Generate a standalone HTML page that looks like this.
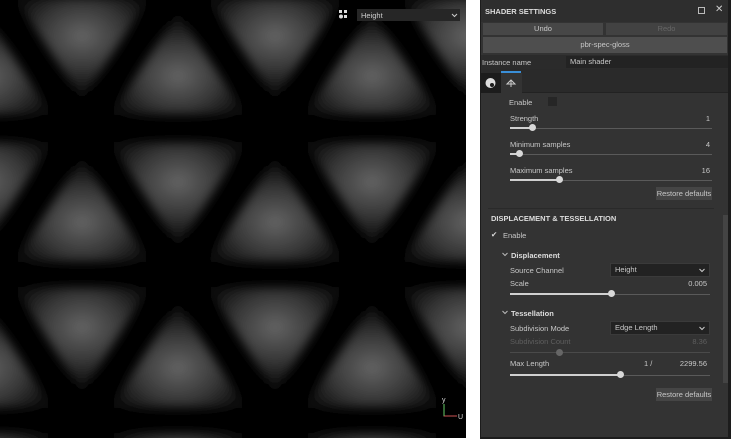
<!DOCTYPE html>
<html><head><style>
*{margin:0;padding:0;box-sizing:border-box}
html,body{width:731px;height:439px;overflow:hidden}
body{background:#fff;font-family:"Liberation Sans",sans-serif;font-size:7.5px;color:#c8c8c8;position:relative}
.a{position:absolute;white-space:nowrap}
.trk{position:absolute;height:1px;background:#5a5a5a}
.fill{position:absolute;height:2px;background:#d0d0d0}
.h{position:absolute;width:7px;height:7px;border-radius:50%;background:#d8d8d8}
.btn{position:absolute;background:#474747;text-align:center;line-height:13px}
.dd{position:absolute;background:#222;border:1px solid #3a3a3a;height:14px;line-height:12px;padding-left:4px}
.b{font-weight:bold}
</style></head><body>
<svg class="a" style="left:0;top:0" width="466" height="438" viewBox="0 0 466 438">
<defs>
<radialGradient id="gu" cx="0.5" cy="0.62" r="0.55"><stop offset="0" stop-color="#646464"/><stop offset="0.55" stop-color="#383838"/><stop offset="1" stop-color="#0c0c0c"/></radialGradient>
<radialGradient id="gd" cx="0.5" cy="0.38" r="0.55"><stop offset="0" stop-color="#646464"/><stop offset="0.55" stop-color="#383838"/><stop offset="1" stop-color="#0c0c0c"/></radialGradient>
<filter id="bl" x="-20%" y="-20%" width="140%" height="140%"><feGaussianBlur stdDeviation="5"/></filter>
</defs>
<rect width="466" height="438" fill="#000"/>
<g filter="url(#bl)">
<polygon fill="url(#gu)" points="-16,12 -84,115 52,115"/>
<polygon fill="url(#gu)" points="178,12 110,115 246,115"/>
<polygon fill="url(#gu)" points="372,12 304,115 440,115"/>
<polygon fill="url(#gd)" points="14,-3 150,-3 82,100"/>
<polygon fill="url(#gd)" points="207,-3 343,-3 275,100"/>
<polygon fill="url(#gd)" points="401,-3 537,-3 469,100"/>
<polygon fill="url(#gu)" points="82,157 14,262 150,262"/>
<polygon fill="url(#gu)" points="275,157 207,262 343,262"/>
<polygon fill="url(#gu)" points="469,157 401,262 537,262"/>
<polygon fill="url(#gd)" points="-84,142 52,142 -16,247"/>
<polygon fill="url(#gd)" points="110,142 246,142 178,247"/>
<polygon fill="url(#gd)" points="304,142 440,142 372,247"/>
<polygon fill="url(#gu)" points="-16,302 -84,408 52,408"/>
<polygon fill="url(#gu)" points="178,302 110,408 246,408"/>
<polygon fill="url(#gu)" points="372,302 304,408 440,408"/>
<polygon fill="url(#gd)" points="14,287 150,287 82,393"/>
<polygon fill="url(#gd)" points="207,287 343,287 275,393"/>
<polygon fill="url(#gd)" points="401,287 537,287 469,393"/>
<polygon fill="url(#gd)" points="-84,433 52,433 -16,520"/>
<polygon fill="url(#gd)" points="110,433 246,433 178,520"/>
<polygon fill="url(#gd)" points="304,433 440,433 372,520"/>
</g>
<g fill="#ddd"><rect x="339" y="10" width="3" height="3"/><rect x="344" y="10" width="3" height="3"/><rect x="344" y="15" width="3" height="3"/><circle cx="341" cy="16.5" r="2"/></g>
<rect x="357" y="9" width="103" height="12" fill="#262626"/>
<text x="361" y="18" font-family="Liberation Sans" font-size="7.5" fill="#ccc">Height</text>
<path d="M452 14l2.5 2.5 2.5-2.5" stroke="#ccc" fill="none"/>
<path d="M444 404v12h13" stroke="#c55" fill="none"/><path d="M444 404v12" stroke="#6c6" fill="none"/>
<text x="442" y="402" font-size="7" fill="#ddd" font-family="Liberation Sans">y</text>
<text x="458" y="419" font-size="7" fill="#ddd" font-family="Liberation Sans">U</text>
</svg>

<div class="a" style="left:480px;top:0;width:251px;height:439px;background:#1c1c1c"></div>
<div class="a" style="left:481px;top:0;width:247px;height:437px;background:#333"></div>
<div class="a" style="left:481px;top:0;width:247px;height:22px;background:#2e2e2e"></div>
<div class="a b" style="left:485px;top:7px;color:#ddd">SHADER SETTINGS</div>
<div class="a" style="left:698px;top:7px;width:7px;height:7px;border:1px solid #bbb"></div>
<div class="a" style="left:715px;top:4px;font-size:10px;color:#ccc">✕</div>
<div class="btn" style="left:483px;top:23px;width:120px;height:12px;line-height:12px">Undo</div>
<div class="btn" style="left:606px;top:23px;width:121px;height:12px;line-height:12px;background:#424242;color:#666">Redo</div>
<div class="btn" style="left:483px;top:37px;width:244px;height:16px;line-height:16px;background:#4e4e4e">pbr-spec-gloss</div>
<div class="a" style="left:481px;top:55px;width:247px;height:14px;background:#2b2b2b"></div>
<div class="a" style="left:482px;top:58px">Instance name</div>
<div class="a" style="left:566px;top:56px;width:162px;height:12px;background:#232323;padding-left:4px;line-height:12px">Main shader</div>
<div class="a" style="left:481px;top:69px;width:247px;height:24px;background:#2a2a2a;border-bottom:1px solid #222"></div>
<div class="a" style="left:481px;top:73px;width:20px;height:20px;background:#1c1c1c"></div>
<div class="a" style="left:501px;top:73px;width:21px;height:20px;background:#333"></div>
<div class="a" style="left:501px;top:71px;width:20px;height:2px;background:#3a8fd8"></div>
<svg class="a" style="left:484px;top:77px" width="14" height="12"><circle cx="6.5" cy="6" r="5" fill="#ddd"/><circle cx="8" cy="8" r="2" fill="#1c1c1c"/></svg>
<svg class="a" style="left:505px;top:77px" width="14" height="12"><path d="M2 7 L6 3 L10 7 Z M6 3v7" stroke="#ccc" fill="none"/></svg>

<div class="a" style="left:509px;top:98px">Enable</div>
<div class="a" style="left:548px;top:97px;width:9px;height:9px;background:#262626"></div>
<div class="a" style="left:510px;top:114px">Strength</div><div class="a" style="left:690px;top:114px;width:20px;text-align:right">1</div>
<div class="trk" style="left:510px;top:128px;width:202px"></div><div class="fill" style="left:510px;top:127px;width:22px"></div><div class="h" style="left:529px;top:124px"></div>
<div class="a" style="left:510px;top:140px">Minimum samples</div><div class="a" style="left:690px;top:140px;width:20px;text-align:right">4</div>
<div class="trk" style="left:510px;top:154px;width:202px"></div><div class="fill" style="left:510px;top:153px;width:9px"></div><div class="h" style="left:516px;top:150px"></div>
<div class="a" style="left:510px;top:166px">Maximum samples</div><div class="a" style="left:690px;top:166px;width:20px;text-align:right">16</div>
<div class="trk" style="left:510px;top:180px;width:202px"></div><div class="fill" style="left:510px;top:179px;width:49px"></div><div class="h" style="left:556px;top:176px"></div>
<div class="btn" style="left:656px;top:187px;width:56px;height:13px;background:#454545">Restore defaults</div>
<div class="a" style="left:488px;top:208px;width:226px;height:1px;background:#2a2a2a"></div>
<div class="a" style="left:723px;top:215px;width:5px;height:168px;background:#444"></div>

<div class="a b" style="left:491px;top:214px;color:#ddd">DISPLACEMENT &amp; TESSELLATION</div>
<div class="a" style="left:491px;top:230px;color:#ddd">✔</div><div class="a" style="left:503px;top:231px">Enable</div>
<svg class="a" style="left:502px;top:252px" width="6" height="5"><path d="M0.5 1l2.5 2.5 2.5-2.5" stroke="#bbb" fill="none"/></svg><div class="a b" style="left:511px;top:251px;color:#ddd">Displacement</div>
<div class="a" style="left:510px;top:266px">Source Channel</div>
<div class="dd" style="left:610px;top:263px;width:100px">Height<svg style="position:absolute;right:4px;top:4px" width="6" height="5"><path d="M0.5 1l2.5 2.5 2.5-2.5" stroke="#ccc" fill="none"/></svg></div>
<div class="a" style="left:510px;top:279px">Scale</div><div class="a" style="left:670px;top:279px;width:37px;text-align:right">0.005</div>
<div class="trk" style="left:510px;top:294px;width:200px"></div><div class="fill" style="left:510px;top:293px;width:101px"></div><div class="h" style="left:608px;top:290px"></div>
<svg class="a" style="left:502px;top:310px" width="6" height="5"><path d="M0.5 1l2.5 2.5 2.5-2.5" stroke="#bbb" fill="none"/></svg><div class="a b" style="left:511px;top:309px;color:#ddd">Tessellation</div>
<div class="a" style="left:510px;top:324px">Subdivision Mode</div>
<div class="dd" style="left:610px;top:321px;width:100px">Edge Length<svg style="position:absolute;right:4px;top:4px" width="6" height="5"><path d="M0.5 1l2.5 2.5 2.5-2.5" stroke="#ccc" fill="none"/></svg></div>
<div class="a" style="left:510px;top:337px;color:#5e5e5e">Subdivision Count</div><div class="a" style="left:680px;top:337px;width:27px;text-align:right;color:#5e5e5e">8.36</div>
<div class="trk" style="left:510px;top:352px;width:200px;background:#4a4a4a"></div><div class="h" style="left:556px;top:349px;background:#666"></div>
<div class="a" style="left:510px;top:359px">Max Length</div><div class="a" style="left:644px;top:359px">1 /</div><div class="a" style="left:670px;top:359px;width:37px;text-align:right">2299.56</div>
<div class="trk" style="left:510px;top:375px;width:200px"></div><div class="fill" style="left:510px;top:374px;width:110px"></div><div class="h" style="left:617px;top:371px"></div>
<div class="btn" style="left:656px;top:388px;width:56px;height:13px;background:#454545">Restore defaults</div>
</body></html>
